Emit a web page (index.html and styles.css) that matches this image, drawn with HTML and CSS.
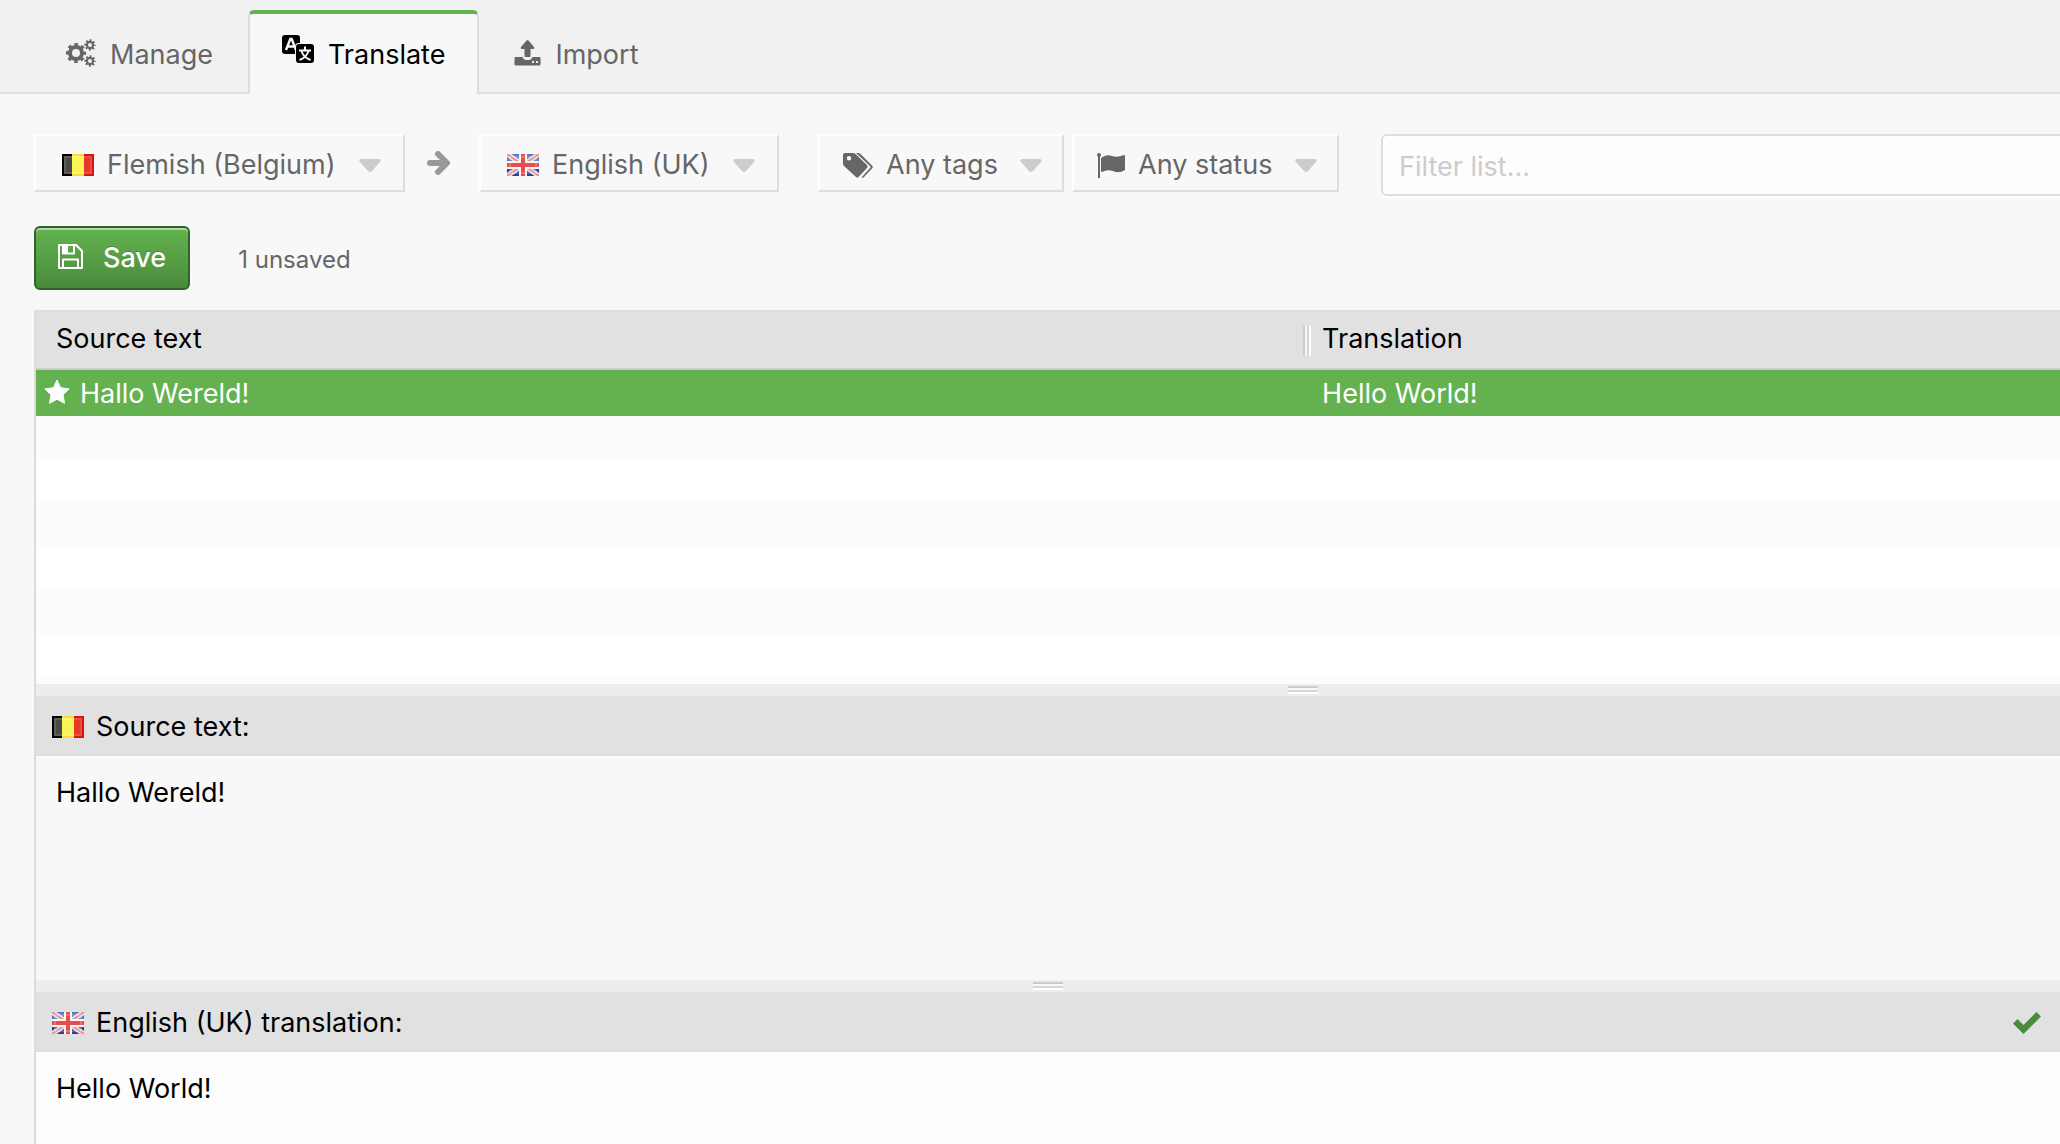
FILE: index.html
```html
<!DOCTYPE html>
<html lang="en">
<head>
    <meta charset="UTF-8">
    <meta name="viewport" content="width=device-width, initial-scale=1.0">
    <title>Translate</title>
    <link rel="stylesheet" href="styles.css">
</head>
<body>
    <!-- Shared flag artwork -->
    <svg class="defs" aria-hidden="true">
        <symbol id="flag-be" viewBox="0 0 32 22">
            <path fill="#000" d="M0 0h10v22H0z"/>
            <path fill="#ffd83a" d="M10 0h12v22H10z"/>
            <path fill="#d81410" d="M22 0h10v22H22z"/>
            <path fill="#484846" d="M2 2h8v18H2z"/>
            <path fill="#fbf459" d="M10 2h12v18H10z"/>
            <path fill="#e5382b" d="M22 2h8v18h-8z"/>
            <path fill="none" stroke="#fff" stroke-opacity=".12" stroke-width="2" d="M3 3h26v16H3z"/>
        </symbol>
        <symbol id="flag-gb" viewBox="0 0 32 22">
            <path fill="#5b7cc4" d="M0 0h32v22H0z"/>
            <path fill="#2b429a" d="M0 13h32v9H0z"/>
            <path stroke="#efe6ee" stroke-width="5" d="M0 0l32 22M32 0L0 22"/>
            <path stroke="#ea918f" stroke-width="2" d="M0 0l32 22M32 0L0 22"/>
            <path fill="#fbf3f4" d="M12 0h8v22h-8zM0 7h32v8H0z"/>
            <path fill="#e2504f" d="M14 0h4v22h-4zM0 9h32v4H0z"/>
            <path fill="none" stroke="#fff" stroke-opacity=".2" stroke-width="2" d="M3 3h26v16H3z"/>
        </symbol>
        <symbol id="caret" viewBox="0 0 22 13">
            <path fill="currentColor" d="M2 0h18q3 1 1 3l-8 9q-2 2-4 0L1 3q-2-2 1-3z"/>
        </symbol>
    </svg>

    <nav class="tabs">
        <a class="tab" href="#manage">
            <svg class="icon-gears" viewBox="0 0 30 28" fill="none" stroke="currentColor">
                <circle cx="10" cy="14" r="6" stroke-width="4"/>
                <circle cx="10" cy="14" r="8.6" stroke-width="3" stroke-dasharray="3.4 3.35" stroke-dashoffset="1.7"/>
                <circle cx="24" cy="6" r="3.1" stroke-width="2.2"/>
                <circle cx="24" cy="6" r="4.8" stroke-width="1.8" stroke-dasharray="1.9 1.87" stroke-dashoffset="1"/>
                <circle cx="24" cy="22" r="3.1" stroke-width="2.2"/>
                <circle cx="24" cy="22" r="4.8" stroke-width="1.8" stroke-dasharray="1.9 1.87" stroke-dashoffset="1"/>
            </svg>
            Manage
        </a>
        <a class="tab active" href="#translate">
            <svg class="icon-language" viewBox="0 0 32 28">
                <rect width="18" height="19" rx="3"/>
                <path fill="none" stroke="#f8f8f8" stroke-width="2.4" d="M4 15L8.300 4h1.400L14 15M6 11.500h6.500"/>
                <rect x="13" y="8" width="20" height="21" rx="4" fill="#f8f8f8"/>
                <rect x="14" y="9" width="18" height="19" rx="3"/>
                <path fill="none" stroke="#f8f8f8" stroke-width="2" d="M23 11.500v3.500M17 15.500h12M26.500 16q-2 6.500-9 9M19.500 16q2 6.500 9 9"/>
            </svg>
            Translate
        </a>
        <a class="tab" href="#import">
            <svg class="icon-upload" viewBox="0 0 26 26" fill="currentColor">
                <path d="M13 0q.6 0 1.200.7l5.300 6.400q1 1.400-.5 1.900h-3v7q0 1-1 1h-4q-1 0-1-1V9H7q-1.500-.5-.5-1.900L11.800.7Q12.400 0 13 0z"/>
                <path fill-rule="evenodd" d="M1 17h7q1 3 3 3h4q2 0 3-3h7q1 0 1 1v6q0 1.500-1.500 1.500h-23Q0 25.500 0 24v-6q0-1 1-1zM17.500 21v2h2v-2zM21.500 21v2h2v-2z"/>
            </svg>
            Import
        </a>
    </nav>

    <main class="content">
        <form class="filters" onsubmit="event.preventDefault()">
            <label class="dropdown">
                <svg class="flag"><use href="#flag-be"/></svg>
                <select aria-label="Source language"><option>Flemish (Belgium)</option></select>
                <svg class="caret"><use href="#caret"/></svg>
            </label>
            <svg class="arrow" viewBox="0 0 24 24" fill="none" stroke="currentColor" stroke-width="6" stroke-linecap="round" stroke-linejoin="round">
                <path d="M3 12h16M11 3l9 9-9 9"/>
            </svg>
            <label class="dropdown">
                <svg class="flag"><use href="#flag-gb"/></svg>
                <select aria-label="Target language"><option>English (UK)</option></select>
                <svg class="caret"><use href="#caret"/></svg>
            </label>
            <div class="dropdown-group">
                <label class="dropdown">
                    <svg class="icon-tags" viewBox="0 0 30 25" fill="currentColor">
                        <path fill-rule="evenodd" d="M2 0h8q1.500 0 2.500 1L24 12q1.500 1.500 0 3l-8.500 9q-1 1-2.500 0L1 13q-1-1-1-2.500V2q0-2 2-2zM6 3a2.200 2.200 0 1 0 0 4.400A2.200 2.200 0 0 0 6 3z"/>
                        <path d="M13 0h2q1.500 0 2.500 1L29 12.500q1.500 1.500 0 3l-8 8.500q-1 1-2.500.5L27 15q1-1 0-2z"/>
                    </svg>
                    <select aria-label="Tags"><option>Any tags</option></select>
                    <svg class="caret"><use href="#caret"/></svg>
                </label>
                <label class="dropdown">
                    <svg class="icon-flag" viewBox="0 0 28 25" fill="currentColor">
                        <circle cx="2" cy="2" r="2"/>
                        <path d="M1 2h2v23H1zM4 5q5-4 11-2 5 2 12-1 1 0 1 1v14q-6 4-12 1-6-2-11 1-1 0-1-1z"/>
                    </svg>
                    <select aria-label="Status"><option>Any status</option></select>
                    <svg class="caret"><use href="#caret"/></svg>
                </label>
            </div>
            <input class="filter-input" type="text" placeholder="Filter list..." aria-label="Filter list">
        </form>

        <div class="actions">
            <button class="save" type="button">
                <svg class="icon-save" viewBox="0 0 25 25" fill="none" stroke="currentColor" stroke-width="2" stroke-linejoin="round">
                    <path d="M1 1h17l6 6v17H1z"/>
                    <path d="M5 24v-8.500h15V24M5 1v8.500h11V1"/>
                    <path fill="currentColor" stroke="none" d="M5 1h5v8H5z"/>
                </svg>
                Save
            </button>
            <span class="status">1 unsaved</span>
        </div>

        <div class="editor">
            <div class="list">
                <table>
                    <thead>
                        <tr>
                            <th class="col-source">Source text</th>
                            <th class="col-translation">Translation</th>
                        </tr>
                    </thead>
                    <tbody>
                        <tr class="selected">
                            <td class="cell-source">
                                <svg class="icon-star" viewBox="0 0 26 25" fill="currentColor" stroke="currentColor" stroke-linejoin="round">
                                    <path d="M13 1l3.600 7.700 8.600 1.200-6.200 5.900 1.500 8.500-7.500-4.100-7.500 4.100L7 15.800.8 9.900l8.600-1.200z"/>
                                </svg>
                                Hallo Wereld!
                            </td>
                            <td class="col-translation">Hello World!</td>
                        </tr>
                    </tbody>
                </table>
            </div>

            <div class="splitter splitter-list" role="separator"><span class="grip"></span></div>

            <h2 class="pane-title">
                <svg class="flag"><use href="#flag-be"/></svg>
                Source text:
            </h2>
            <div class="pane source">Hallo Wereld!</div>

            <div class="splitter" role="separator"><span class="grip"></span></div>

            <h2 class="pane-title">
                <svg class="flag"><use href="#flag-gb"/></svg>
                <label for="translation">English (UK) translation:</label>
                <svg class="icon-check" viewBox="0 0 28 22"><path fill="#4a8c3c" d="M4.500 7l6 6L23.500 0 28 4.500 10.500 22 0 11.500z"/></svg>
            </h2>
            <textarea class="pane translation" id="translation">Hello World!</textarea>
        </div>
    </main>
</body>
</html>
```
FILE: styles.css
```css
* {
    box-sizing: border-box;
}
body {
    margin: 0;
    height: 100vh;
    display: flex;
    flex-direction: column;
    overflow: hidden;
    background-color: #f8f8f8;
    color: #000;
    font-family: Inter, "Liberation Sans", sans-serif;
    font-size: 27px;
    line-height: 34px;
}
svg {
    flex: none;
}
.defs {
    display: none;
}
.flag {
    width: 32px;
    height: 22px;
}

/* Tabs */
.tabs {
    flex: none;
    display: flex;
    height: 94px;
    padding: 10px 40px 0;
    background-color: #f1f1f1;
    box-shadow: inset 0 -2px #ddd;
}
.tab {
    display: flex;
    align-items: center;
    gap: 14px;
    padding: 5px 35px 0;
    color: #666;
    text-decoration: none;
}
.tab:first-child {
    padding: 5px 35px 0 26px;
}
.tab.active {
    padding: 1px 32px 0;
    background-color: #f8f8f8;
    border: 2px solid #ddd;
    border-top: 4px solid #62b14f;
    border-bottom: none;
    border-radius: 6px 6px 0 0;
    color: #000;
}
.icon-gears {
    width: 30px;
    height: 28px;
    margin-bottom: 4px;
}
.icon-language {
    width: 32px;
    height: 28px;
    margin-bottom: 12px;
}
.icon-upload {
    width: 27px;
    height: 26px;
    margin-bottom: 4px;
}

/* Filter bar */
.content {
    flex: 1;
    min-height: 0;
    display: flex;
    flex-direction: column;
    padding: 40px 0 0 34px;
}
.filters {
    display: flex;
    align-items: flex-start;
}
.dropdown {
    display: flex;
    align-items: center;
    gap: 13px;
    height: 58px;
    padding: 4px 22px 0 26px;
    border: 2px solid;
    border-color: #fff #ddd #ddd #fff;
    color: #666;
}
.dropdown select {
    appearance: none;
    padding: 0;
    border: none;
    background: none;
    color: inherit;
    font: inherit;
}
.caret {
    width: 22px;
    height: 13px;
    margin-left: 10px;
    color: #ccc;
}
.arrow {
    width: 24px;
    height: 24px;
    margin: 17px 28px 0 22px;
    color: #999;
}
.dropdown-group {
    display: flex;
    gap: 8px;
    margin: 0 40px 0 39px;
}
.dropdown-group .dropdown {
    padding: 4px 20px 0 23px;
}
.dropdown-group .caret {
    margin-left: 9px;
}
.icon-tags {
    width: 30px;
    height: 25px;
}
.icon-flag {
    width: 28px;
    height: 25px;
}
.filter-input {
    flex: 1;
    min-width: 0;
    height: 62px;
    padding: 2px 16px 0;
    border: 2px solid #ddd;
    border-right: none;
    border-radius: 6px 0 0 6px;
    background-color: #fdfdfd;
    box-shadow: 0 2px #fff;
    font: inherit;
}
.dropdown-group + .filter-input {
    margin-left: 2px;
}
.filter-input::placeholder {
    color: #ccc;
}

/* Save row */
.actions {
    display: flex;
    align-items: center;
    gap: 48px;
    padding: 30px 0 20px;
}
.save {
    display: flex;
    align-items: center;
    gap: 20px;
    height: 64px;
    padding: 0 22px;
    border: 2px solid #31632a;
    border-radius: 6px;
    background: linear-gradient(#64b350, #4a8a3b);
    box-shadow: inset 0 2px rgba(255, 255, 255, 0.5);
    color: #fff;
    font: inherit;
    font-weight: 500;
    text-shadow: 0 -1px rgba(0, 0, 0, 0.2);
    cursor: pointer;
}
.icon-save {
    width: 25px;
    height: 25px;
    margin-bottom: 4px;
}
.status {
    color: #666;
    font-size: 24px;
    padding-top: 4px;
}

/* Editor */
.editor {
    flex: 1;
    min-height: 0;
    display: flex;
    flex-direction: column;
    border-left: 2px solid #ddd;
}
.list {
    flex: none;
    height: 374px;
    background: repeating-linear-gradient(#fff 0 16px, #fcfcfc 16px 60px, #fff 60px 104px, #fcfcfc 104px 148px, #fff 148px 192px, #fcfcfc 192px 236px, #fff 236px 280px, #fcfcfc 280px 324px, #fff 324px 368px, #fcfcfc 368px 374px);
}
table {
    width: 100%;
    table-layout: fixed;
    border-collapse: separate;
    border-spacing: 0;
}
th {
    height: 60px;
    padding: 0 0 2px;
    border-top: 2px solid #ddd;
    border-bottom: 2px solid #ccc;
    background-color: #e1e1e1;
    font-weight: normal;
    text-align: left;
}
.col-source {
    width: 63%;
    padding-left: 20px;
    background-image: linear-gradient(90deg, #ccc 0 2px, #f8f8f8 2px 4px, #d4d4d4 4px 6px, #fff 6px 8px);
    background-repeat: no-repeat;
    background-size: 8px 30px;
    background-position: right 0 top 14px;
}
td {
    height: 46px;
    padding: 2px 0 0;
}
.col-translation {
    padding-left: 11px;
}
.selected {
    background-color: #63b24f;
    color: #fff;
}
.cell-source {
    display: flex;
    align-items: center;
    gap: 10px;
    padding-left: 8px;
}
.icon-star {
    width: 26px;
    height: 25px;
    margin-bottom: 6px;
}
.splitter {
    flex: none;
    display: flex;
    justify-content: center;
    height: 12px;
    padding-top: 2px;
    background-color: #ededed;
    cursor: row-resize;
}
.splitter-list {
    justify-content: flex-start;
    padding-left: calc(62% - 3px);
}
.grip {
    width: 30px;
    height: 8px;
    background: linear-gradient(#ccc 0 2px, #f8f8f8 2px 4px, #d8d8d8 4px 6px, #fff 6px 8px);
}
.pane-title {
    flex: none;
    display: flex;
    align-items: center;
    gap: 12px;
    height: 60px;
    margin: 0;
    padding: 4px 19px 0 16px;
    border-bottom: 2px solid #ddd;
    background-color: #e1e1e1;
    font-size: 27px;
    font-weight: normal;
}
.icon-check {
    width: 28px;
    height: 22px;
    margin-left: auto;
}
.pane {
    padding: 20px;
}
.source {
    flex: none;
    height: 224px;
}
.translation {
    flex: 1;
    min-height: 0;
    border: none;
    outline: none;
    resize: none;
    background-color: #fdfdfd;
    color: inherit;
    font: inherit;
}
```
